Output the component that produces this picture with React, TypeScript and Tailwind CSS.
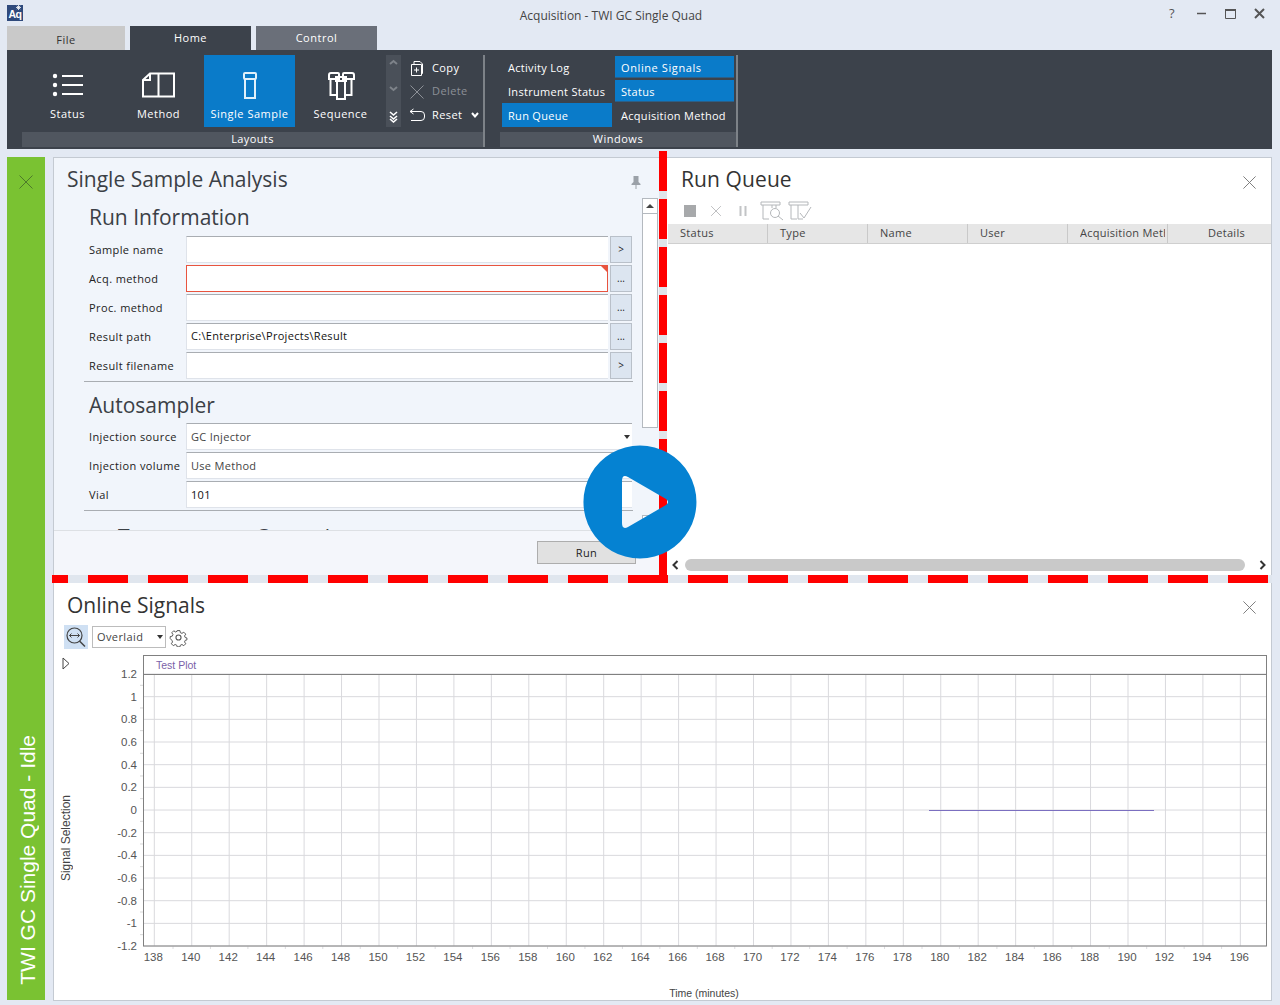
import React from "react";

const xTicks = Array.from({ length: 30 }, (_, i) => 138 + i * 2);
const yTicks = ["1.2", "1", "0.8", "0.6", "0.4", "0.2", "0", "-0.2", "-0.4", "-0.6", "-0.8", "-1", "-1.2"];

function X({ size = 16, color = "#777", w = 1 }: { size?: number; color?: string; w?: number }) {
  return (
    <svg width={size} height={size} viewBox="0 0 16 16" className="shrink-0">
      <path d="M1.5 1.5 14.5 14.5M14.5 1.5 1.5 14.5" stroke={color} strokeWidth={w} fill="none" />
    </svg>
  );
}

function LayoutButton({ label, active, icon }: { label: string; active?: boolean; icon: React.ReactNode }) {
  return (
    <div className={`w-[91px] h-[72px] flex flex-col items-center text-[11px] tracking-[0.5px] text-white ${active ? "bg-[#0a7bc9]" : ""}`}>
      <div className="h-[45px] flex items-end justify-center">{icon}</div>
      <div className="mt-[6px] h-[16px] leading-[16px] whitespace-nowrap">{label}</div>
    </div>
  );
}

function FormRow({ label, value, btn, wide, error, arrow, muted }: { label: string; value?: string; btn?: string; wide?: boolean; error?: boolean; arrow?: boolean; muted?: boolean }) {
  return (
    <div className="flex h-[27px] mb-[2px] items-stretch">
      <div className="w-[102px] shrink-0 pl-[5px] text-[11px] tracking-[0.4px] text-[#222] leading-[27px] whitespace-nowrap">{label}</div>
      <div className={`relative ${wide ? "w-[446px] leading-[26px]" : "w-[422px] leading-[24px]"} shrink-0 bg-white pl-[4px] text-[11px] tracking-[0.3px] ${muted ? "text-[#444]" : "text-[#111]"} ${error ? "border-t border-r border-b border-l border-t-[#e8543f] border-r-[#e8543f] border-b-[#e8543f] border-l-[#e8543f]" : "border-t border-t-[#a9adb2] border-b border-b-[#dfe3ea] border-l border-l-[#dfe3ea]"}`}>
        {value}
        {error && <div className="absolute top-0 right-0 w-0 h-0 border-t-[6px] border-t-[#e8543f] border-l-[6px] border-l-transparent" />}
        {arrow && <div className="absolute top-[11px] right-[2px] w-0 h-0 border-t-[4px] border-t-[#333] border-x-[3px] border-x-transparent" />}
      </div>
      {btn && (
        <div className="ml-[2px] w-[22px] shrink-0 bg-[#dce5f0] border border-[#b9c0c9] text-[10px] text-[#222] flex items-center justify-center">{btn}</div>
      )}
    </div>
  );
}

export default function App() {
  return (
    <div className="w-[1280px] h-[1005px] overflow-hidden relative bg-[#e3e9f3] font-['Open_Sans','Noto_Sans',sans-serif] text-[#333]">
      {/* Title bar */}
      <div className="h-[26px] flex items-start relative">
        <div className="relative ml-[7px] mt-[5px] w-[16px] h-[16px] bg-[#2f4a7c] text-white text-[10.5px] font-bold leading-[19px] text-center tracking-[-0.5px] font-['Liberation_Sans',sans-serif]">
          Aq
          <svg width="5" height="5" viewBox="0 0 5 5" className="absolute top-0 right-[2px]"><path d="M2.5 0V5M0 2.500H5M.8.8 4.200 4.200M4.200.8.8 4.200" stroke="#fff" strokeWidth=".8" /></svg>
        </div>
        <div className="flex-1 text-center text-[12px] leading-[32px] text-[#444] pl-[30px]">Acquisition - TWI GC Single Quad</div>
        <div className="flex items-center h-[27px] mr-[15px] text-[#555]">
          <span className="text-[13px] w-[27px]">?</span>
          <svg width="11" height="11" viewBox="0 0 11 11" className="mr-[18px]"><path d="M1 5.5H10" stroke="#555" strokeWidth="1.5" /></svg>
          <svg width="11" height="11" viewBox="0 0 11 11" className="mr-[18px]"><path d="M.5 1.5H10.5V10.5H.5Z" stroke="#555" fill="none" /><path d="M0 2H11" stroke="#555" strokeWidth="2" /></svg>
          <svg width="11" height="11" viewBox="0 0 11 11"><path d="M1 1 10 10M10 1 1 10" stroke="#555" strokeWidth="2" /></svg>
        </div>
      </div>

      {/* Tabs */}
      <div className="h-[24px] pl-[7px] flex gap-[5px] text-[11px] tracking-[0.5px]">
        <div className="w-[118px] bg-[#c9c9c9] text-[#333] text-center leading-[27px]">File</div>
        <div className="w-[121px] bg-[#3c424b] text-white text-center leading-[23px]">Home</div>
        <div className="w-[121px] bg-[#6a6f79] text-white text-center leading-[23px]">Control</div>
      </div>

      {/* Ribbon */}
      <div className="ml-[7px] w-[1265px] h-[99px] bg-[#3c424b] flex pl-[15px] text-white text-[11px] tracking-[0.4px]">
        <div className="w-[463px] shrink-0 relative border-r-2 border-r-[#7d8288] mt-[5px] h-[92px] flex flex-col">
          <div className="h-[72px] flex">
            <LayoutButton label="Status" icon={
              <svg width="32" height="26" viewBox="0 0 32 26" className="mb-[2px]" fill="none" stroke="#fff" strokeWidth="2">
                <circle cx="3" cy="4" r="2.2" fill="#fff" stroke="none" /><circle cx="3" cy="13" r="2.2" fill="#fff" stroke="none" /><circle cx="3" cy="22" r="2.2" fill="#fff" stroke="none" />
                <path d="M10 4H31M10 13H31M10 22H31" />
              </svg>
            } />
            <LayoutButton label="Method" icon={
              <svg width="33" height="26" viewBox="0 0 33 26" className="mb-[2px]" fill="none" stroke="#fff" strokeWidth="2">
                <path d="M8 1.5H32V24.5H1V8ZM16.5 1.5V24.5M8 1.5V8H1" />
              </svg>
            } />
            <LayoutButton active label="Single Sample" icon={
              <svg width="16" height="27" viewBox="0 0 16 27" className="mb-[1px]" fill="none" stroke="#dff1fb" strokeWidth="2">
                <rect x="2" y="1" width="12" height="6" rx="1" /><rect x="3" y="7" width="10" height="19" />
              </svg>
            } />
            <LayoutButton label="Sequence" icon={
              <svg width="28" height="28" viewBox="0 0 28 28" fill="none" stroke="#fff" strokeWidth="2">
                <path d="M2 7V3a2 2 0 0 1 2-2h7a1 1 0 0 1 1 1V7ZM16 7V2a1 1 0 0 1 1-1h8a2 2 0 0 1 2 2V7ZM3.5 7V23H9M24.5 7V23H19M9 5H19V9H9ZM10 9H18V27H10Z" />
              </svg>
            } />
            <div className="w-[15px] h-[72px] bg-[#4a5059] flex flex-col items-center justify-between py-[4px]">
              <svg width="9" height="7" viewBox="0 0 9 7"><path d="M1 5 4.5 2 8 5" stroke="#7e838a" strokeWidth="2" fill="none" /></svg>
              <svg width="9" height="7" viewBox="0 0 9 7"><path d="M1 2 4.5 5 8 2" stroke="#7e838a" strokeWidth="2" fill="none" /></svg>
              <svg width="9" height="12" viewBox="0 0 9 12"><path d="M1 1 4.5 4 8 1M1 5 4.5 8 8 5M1 8 4.5 11 8 8" stroke="#fff" strokeWidth="1.6" fill="none" /></svg>
            </div>
            <div className="flex flex-col pl-[8px] w-[82px] pt-[1px]">
              <div className="h-[24px] flex items-center gap-[7px]">
                <svg width="16" height="16" viewBox="0 0 16 16" fill="none" stroke="#fff"><path d="M2.5 4.5H12.5V15.5H2.5ZM5 4.5V1.5H11L13.5 4V13.5H12.5M7.5 7.5V12.5M5 10H10" /></svg>
                <span>Copy</span>
              </div>
              <div className="h-[24px] flex items-center gap-[7px] text-[#8c9097]">
                <X size={16} color="#8c9097" />
                <span>Delete</span>
              </div>
              <div className="h-[24px] flex items-center gap-[7px]">
                <svg width="16" height="14" viewBox="0 0 16 14" fill="none" stroke="#fff"><path d="M4.5 1 1 3.5 4.5 6M1 3.5H12a3.5 3.5 0 0 1 3.5 3.5v2a3.5 3.5 0 0 1-3.5 3.5H2" /></svg>
                <span>Reset</span>
                <svg width="8" height="6" viewBox="0 0 8 6" className="ml-[2px]"><path d="M1 1 4 4.5 7 1" stroke="#fff" strokeWidth="2" fill="none" /></svg>
              </div>
            </div>
          </div>
          <div className="mt-[5px] h-[15px] w-[461px] bg-[#50565f] text-center leading-[13px]">Layouts</div>
        </div>

        <div className="ml-[15px] w-[238px] shrink-0 mt-[5px] h-[92px] border-r-2 border-r-[#7d8288] flex flex-col">
          <div className="h-[72px] grid grid-cols-[115px_119px] grid-rows-[24px_24px_24px] tracking-[0.3px]">
            <div className="pl-[8px] pt-[2px] flex items-center">Activity Log</div>
            <div className="bg-[#0a7bc9] pl-[6px] pt-[3px] flex items-center my-[1px] border-b border-b-[#2b5f88] tracking-[0.6px]">Online Signals</div>
            <div className="pl-[8px] pt-[2px] flex items-center">Instrument Status</div>
            <div className="bg-[#0a7bc9] pl-[6px] pt-[3px] flex items-center my-[1px] border-b border-b-[#2b5f88]">Status</div>
            <div className="ml-[2px] mr-[3px] bg-[#0a7bc9] pl-[6px] pt-[2px] flex items-center">Run Queue</div>
            <div className="pl-[6px] pt-[2px] flex items-center">Acquisition Method</div>
          </div>
          <div className="mt-[5px] h-[15px] bg-[#50565f] text-center leading-[13px] tracking-[0.5px]">Windows</div>
        </div>
      </div>

      {/* Workspace */}
      <div className="mt-[8px] flex items-start">
        <div className="ml-[7px] w-[38px] h-[843px] bg-[#7ac232] flex flex-col items-center justify-between shrink-0 pt-[17px] pb-[15px]">
          <X size={16} color="#4d7a2a" />
          <div className="ml-[3px] [writing-mode:vertical-rl] rotate-180 font-['Liberation_Sans',sans-serif] text-[21px] leading-[38px] text-white whitespace-nowrap">TWI GC Single Quad - Idle</div>
        </div>

        <div className="ml-[8px] w-[1219px] shrink-0 flex flex-col">
          {/* Upper row */}
          <div className="flex h-[418px]">
            {/* Single Sample Analysis */}
            <div className="w-[606px] shrink-0 bg-[#f1f5fb] border-t border-t-[#c4cad2] border-l border-l-[#c4cad2] flex flex-col">
              <div className="h-[40px] flex items-start justify-between pl-[13px] pr-[18px] shrink-0">
                <div className="text-[21px] leading-[42px] text-[#3b4046]">Single Sample Analysis</div>
                <svg width="10" height="13" viewBox="0 0 10 13" className="mt-[18px]"><path d="M2.5 0H7.5V6L9.5 8V9H5.5V13H4.5V9H.5V8L2.5 6Z" fill="#9ba1a8" /></svg>
              </div>
              <div className="h-[332px] flex overflow-hidden">
                <div className="w-[588px] shrink-0 pl-[30px]">
                  <div className="h-[38px] pl-[5px] text-[21px] leading-[38px] text-[#3b4046]">Run Information</div>
                  <FormRow label="Sample name" btn=">" />
                  <FormRow label="Acq. method" btn="..." error />
                  <FormRow label="Proc. method" btn="..." />
                  <FormRow label="Result path" btn="..." value="C:\Enterprise\Projects\Result" />
                  <FormRow label="Result filename" btn=">" />
                  <div className="w-[549px] border-t border-t-[#a9adb2] mt-[1px]" />
                  <div className="h-[41px] pl-[5px] text-[21px] leading-[46px] text-[#3b4046]">Autosampler</div>
                  <FormRow wide label="Injection source" value="GC Injector" arrow muted />
                  <FormRow wide label="Injection volume" value="Use Method" arrow muted />
                  <FormRow wide label="Vial" value="101" />
                  <div className="w-[549px] border-t border-t-[#a9adb2] mt-[1px]" />
                  <div className="h-[36px] pl-[34px] text-[21px] leading-[53px] text-[#3b4046] tracking-[0.3px] whitespace-nowrap">Temperature Control</div>
                </div>
                <div className="w-[16px] shrink-0 flex flex-col">
                  <div className="h-[230px] bg-white border border-[#b4b9bf]">
                    <div className="h-[15px] border-b border-b-[#b4b9bf] flex items-center justify-center">
                      <div className="w-0 h-0 border-b-[4px] border-b-[#444] border-x-[4px] border-x-transparent" />
                    </div>
                  </div>
                  <div className="h-[87px] bg-[#f1f5fb]" />
                  <div className="h-[15px] bg-white border border-[#b4b9bf]" />
                </div>
              </div>
              <div className="h-[45px] shrink-0 border-t border-t-[#dde0e4] bg-[#f4f6fb] flex items-start justify-start pl-[483px] pt-[10px]">
                <div className="w-[99px] h-[23px] bg-[#e1e1e1] border border-[#adadad] text-center text-[11px] tracking-[0.4px] leading-[21px] text-[#222]">Run</div>
              </div>
            </div>

            {/* Splitter vertical */}
            <div className="w-[8px] -mt-[6px] h-[424px] shrink-0 bg-[repeating-linear-gradient(180deg,#ff0000_0_40px,#dfe5ea_40px_48px)]" />

            {/* Run Queue */}
            <div className="w-[605px] shrink-0 bg-white border-t border-t-[#c4cad2] border-r border-r-[#c4cad2] flex flex-col">
              <div className="h-[46px] flex items-start justify-between pl-[14px] pr-[14px] shrink-0">
                <div className="text-[21px] leading-[42px] tracking-[0.1px] text-[#333]">Run Queue</div>
                <div className="mt-[17px]"><X size={15} color="#777" /></div>
              </div>
              <div className="h-[21px] flex items-center pl-[17px] shrink-0 -mt-[4px] mb-[3px]">
                <div className="w-[12px] h-[12px] bg-[#a7a9ab]" />
                <div className="ml-[14px]"><X size={12} color="#a9abad" /></div>
                <svg width="8" height="12" viewBox="0 0 8 12" className="ml-[17px]"><path d="M1.5 1V11M6.5 1V11" stroke="#c2c4c6" strokeWidth="2" /></svg>
                <svg width="24" height="20" viewBox="0 0 24 20" className="ml-[13px]" fill="none" stroke="#b4b7ba"><path d="M1 4V1H20V4H1M3 4V18H9M12 4V7M16 4V7" /><circle cx="15" cy="12" r="4.5" /><path d="M18 15 23 19" /></svg>
                <svg width="24" height="20" viewBox="0 0 24 20" className="ml-[4px]" fill="none" stroke="#b4b7ba"><path d="M1 4V1H20V4H1M3 4V18H9M10 4V18H15M12 12 16 17 23 6" /></svg>
              </div>
              <div className="h-[20px] bg-[#e6e6e6] border-b border-b-[#cfcfcf] flex text-[11px] tracking-[0.3px] text-[#444] shrink-0 ml-[1px]">
                {["Status", "Type", "Name", "User"].map((c) => (
                  <div key={c} className="w-[100px] pl-[12px] border-r border-r-[#c9c9c9] leading-[18px]">{c}</div>
                ))}
                <div className="w-[100px] pl-[12px] border-r border-r-[#c9c9c9] leading-[18px]">
                  <div className="w-[85px] overflow-hidden whitespace-nowrap tracking-[0.25px]">Acquisition Method</div>
                </div>
                <div className="flex-1 text-center pl-[14px] leading-[18px]">Details</div>
              </div>
              <div className="flex-1" />
              <div className="h-[15px] mb-[3px] flex items-center pl-[5px] pr-[5px] shrink-0">
                <svg width="7" height="10" viewBox="0 0 7 10"><path d="M5.5 1 1.5 5 5.5 9" stroke="#333" strokeWidth="2" fill="none" /></svg>
                <div className="ml-[6px] w-[560px] h-[12px] rounded-full bg-[#c9c9c9]" />
                <div className="flex-1" />
                <svg width="7" height="10" viewBox="0 0 7 10"><path d="M1.5 1 5.5 5 1.5 9" stroke="#333" strokeWidth="2" fill="none" /></svg>
              </div>
            </div>
          </div>

          {/* Splitter horizontal */}
          <div className="h-[8px] -ml-[1px] bg-[repeating-linear-gradient(90deg,#ff0000_0_16px,#e0e6ee_16px_36px,#ff0000_36px_60px)]" />

          {/* Online signals */}
          <div className="h-[418px] bg-white border-l border-b border-r border-[#c4cad2] flex flex-col">
            <div className="h-[41px] flex items-start justify-between pl-[13px] pr-[14px] shrink-0">
              <div className="text-[21px] leading-[44px] text-[#333]">Online Signals</div>
              <div className="mt-[17px]"><X size={15} color="#777" /></div>
            </div>
            <div className="h-[26px] flex items-center pl-[10px] shrink-0">
              <div className="w-[24px] h-[24px] bg-[#cfe0f3] flex items-center justify-center">
                <svg width="24" height="24" viewBox="0 0 24 24" fill="none" stroke="#444"><circle cx="10.5" cy="10.5" r="7.5" strokeWidth="1.2" /><path d="M15.5 16 21 21.5" strokeWidth="1.5" /><path d="M5.5 10.5H15.5M7.5 8.5 5.5 10.5 7.5 12.5M13.5 8.5 15.5 10.5 13.5 12.5" /></svg>
              </div>
              <div className="ml-[4px] w-[74px] h-[22px] bg-white border border-[#bcbcbc] flex items-center justify-between pl-[4px] pr-[2px] text-[11px] tracking-[0.4px] text-[#444]">
                <span>Overlaid</span>
                <div className="w-0 h-0 border-t-[4px] border-t-[#333] border-x-[3.5px] border-x-transparent" />
              </div>
              <svg width="19" height="19" viewBox="0 0 24 24" className="ml-[3px]" fill="none" stroke="#555" strokeWidth="1.4"><circle cx="12" cy="12" r="3.2" /><path d="M10 2h4l.6 3 2.3 1 2.6-1.7 2.8 2.8-1.7 2.6 1 2.3 2.4.6v2.8l-2.4.6-1 2.3 1.7 2.6-2.8 2.8-2.6-1.7-2.3 1-.6 2.4h-4l-.6-2.4-2.3-1-2.6 1.7-2.8-2.8 1.7-2.6-1-2.3L0 13.4v-2.8l3-.6 1-2.3L2.300 5.100l2.800-2.800L7.700 4l2.300-1Z" transform="translate(1.500 1.500) scale(.88)" /></svg>
            </div>
            <div className="flex-1 flex min-h-0 pt-[3px]">
              <div className="w-[46px] shrink-0 flex flex-col items-start pl-[8px] pt-[4px]">
                <svg width="8" height="13" viewBox="0 0 8 13" fill="none" stroke="#444"><path d="M1 1 7 6.500 1 12Z" /></svg>
                <div className="mt-[125px] ml-[-3px] [writing-mode:vertical-rl] rotate-180 font-['Liberation_Sans',sans-serif] text-[12px] leading-[14px] text-[#444] whitespace-nowrap">Signal Selection</div>
              </div>
              <svg width="1172" height="347" viewBox="0 0 1172 347" className="shrink-0 font-['Liberation_Sans',sans-serif]">
                {yTicks.map((t, i) => {
                  const y = 21 + i * 22.67;
                  return (
                    <g key={t}>
                      <line x1="43" x2="1166" y1={y} y2={y} stroke="#d9d9dd" />
                      <line x1="40" x2="43" y1={y + 11.3} y2={y + 11.3} stroke={i < 12 ? "#d8d8d8" : "none"} />
                      <text x="37" y={y + 4} textAnchor="end" fontSize="11.500" fill="#555">{t}</text>
                    </g>
                  );
                })}
                {xTicks.map((t, i) => {
                  const x = 54.3 + i * 37.45;
                  return (
                    <g key={t}>
                      <line x1={x} x2={x} y1="21" y2="293" stroke="#d9d9dd" />
                      <line x1={x + 18.7} x2={x + 18.7} y1="293" y2="296" stroke={i < 29 ? "#dcdcdf" : "none"} />
                      <text x={x - 1} y="308" textAnchor="middle" fontSize="11.500" fill="#555">{t}</text>
                    </g>
                  );
                })}
                <rect x="43.500" y="2.500" width="1123" height="290.500" fill="none" stroke="#808080" />
                <line x1="43" x2="1166" y1="21.500" y2="21.500" stroke="#808080" />
                <text x="56" y="15.500" fontSize="10.500" fill="#7a5fa8">Test Plot</text>
                <line x1="829" x2="1054" y1="157.500" y2="157.500" stroke="#7b6fc0" />
                <text x="604" y="344" textAnchor="middle" fontSize="10.500" fill="#444">Time (minutes)</text>
              </svg>
            </div>
          </div>
        </div>
      </div>

      {/* Play overlay */}
      <svg width="114" height="114" viewBox="0 0 114 114" className="absolute left-[583px] top-[445px]">
        <path fillRule="evenodd" fill="#0582d2" d="M57 .5A56.500 56.500 0 1 1 56.900 .5ZM39 36Q39 29 45 32L83 54Q87 57 83 60L45 82Q39 85 39 78Z" />
      </svg>
    </div>
  );
}
